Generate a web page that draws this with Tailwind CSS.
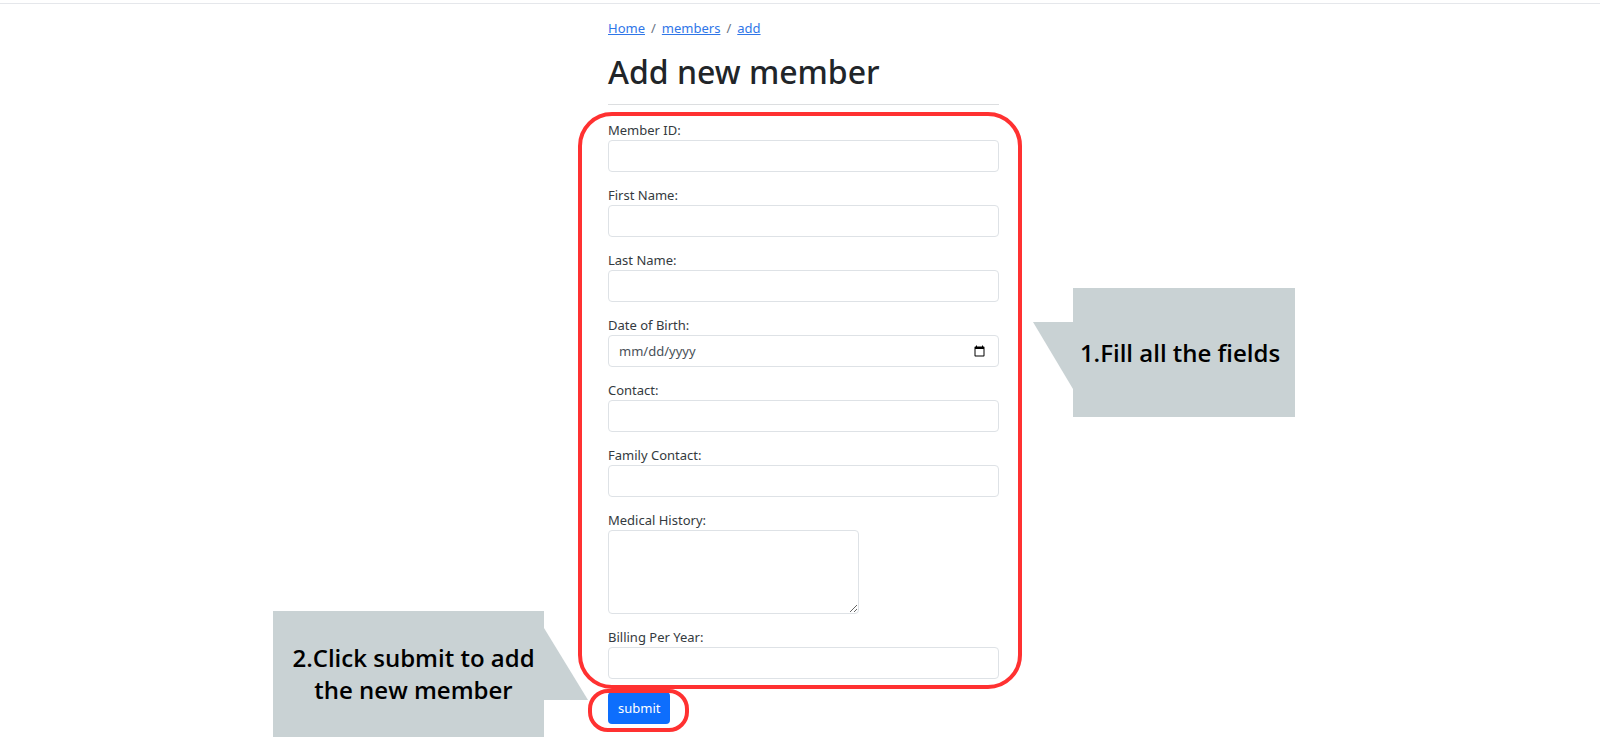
<!DOCTYPE html>
<html lang="en">
<head>
<meta charset="utf-8">
<meta name="viewport" content="width=device-width, initial-scale=1">
<title>Add new member</title>
<script src="https://cdn.jsdelivr.net/npm/@tailwindcss/browser@4"></script>
</head>
<body class="min-h-screen bg-white font-['Noto_Sans',sans-serif] text-[13px] leading-5 text-[#343a40]">
<header class="h-1 border-b border-gray-200"></header>
<main class="mx-auto max-w-[400px] pt-3.5 pr-px pb-6 pl-2">
  <nav aria-label="Breadcrumb">
    <ol class="flex gap-1.5 text-gray-500">
      <li><a href="#" class="text-[#2f76e8] underline">Home</a></li>
      <li aria-hidden="true">/</li>
      <li><a href="#" class="text-[#2f76e8] underline">members</a></li>
      <li aria-hidden="true">/</li>
      <li><a href="#" class="text-[#2f76e8] underline">add</a></li>
    </ol>
  </nav>
  <h1 class="mt-3.5 text-[32px] leading-10 font-medium whitespace-nowrap text-[#212529]">Add new member</h1>
  <hr class="mt-3 border-[#dcdee0]">
  <div class="relative mt-[15px]">
    <form class="flex flex-col gap-[13px]">
      <div class="flex flex-col">
        <label for="member-id">Member ID:</label>
        <input id="member-id" type="text" class="h-8 w-full rounded border border-[#dee2e6] px-2.5">
      </div>
      <div class="flex flex-col">
        <label for="first-name">First Name:</label>
        <input id="first-name" type="text" class="h-8 w-full rounded border border-[#dee2e6] px-2.5">
      </div>
      <div class="flex flex-col">
        <label for="last-name">Last Name:</label>
        <input id="last-name" type="text" class="h-8 w-full rounded border border-[#dee2e6] px-2.5">
      </div>
      <div class="flex flex-col">
        <label for="birth">Date of Birth:</label>
        <input id="birth" type="date" class="h-8 w-full rounded border border-[#dee2e6] px-2.5 text-[#495057] [&::-webkit-datetime-edit-day-field]:p-0 [&::-webkit-datetime-edit-month-field]:p-0 [&::-webkit-datetime-edit-text]:p-0 [&::-webkit-datetime-edit-year-field]:p-0">
      </div>
      <div class="flex flex-col">
        <label for="contact">Contact:</label>
        <input id="contact" type="text" class="h-8 w-full rounded border border-[#dee2e6] px-2.5">
      </div>
      <div class="flex flex-col">
        <label for="family">Family Contact:</label>
        <input id="family" type="text" class="h-8 w-full rounded border border-[#dee2e6] px-2.5">
      </div>
      <div class="flex flex-col items-start">
        <label for="history">Medical History:</label>
        <textarea id="history" class="h-[84px] w-[251px] rounded border border-[#dee2e6] px-2.5 py-1.5"></textarea>
      </div>
      <div class="flex flex-col">
        <label for="billing">Billing Per Year:</label>
        <input id="billing" type="text" class="h-8 w-full rounded border border-[#dee2e6] px-2.5">
      </div>
      <button type="submit" class="h-8 self-start rounded bg-[#0d6efd] px-2.5 text-white">submit</button>
    </form>

    <!-- Highlight rings -->
    <div class="pointer-events-none absolute -top-2 -right-[23px] -left-[30px] h-[577px] rounded-[34px] border-4 border-[#ff3131]"></div>
    <div class="pointer-events-none absolute top-[569px] -left-5 h-[43px] w-[101px] rounded-[20px] border-4 border-[#ff3131]"></div>

    <!-- Step callouts -->
    <aside class="absolute top-[168px] left-full ml-[34px] flex font-['Open_Sans',sans-serif] text-2xl leading-8 font-semibold text-black">
      <svg class="mt-[34px] h-[67px] w-10" viewBox="0 0 40 67" fill="#c9d2d4" aria-hidden="true"><path d="M0 0H40V67Z"/></svg>
      <p class="flex h-[129px] w-[222px] items-center justify-center bg-[#c9d2d4] pr-2 whitespace-nowrap">1.Fill all the fields</p>
    </aside>
    <aside class="absolute top-[491px] right-full mr-5 flex font-['Open_Sans',sans-serif] text-2xl leading-8 font-semibold text-black">
      <p class="flex h-[126px] w-[271px] items-center justify-center bg-[#c9d2d4] pl-2.5 text-center whitespace-nowrap">2.Click submit to add<br>the new member</p>
      <svg class="mt-[17px] h-[72px] w-11" viewBox="0 0 44 72" fill="#c9d2d4" aria-hidden="true"><path d="M0 0L44 72H0Z"/></svg>
    </aside>
  </div>
</main>
</body>
</html>
